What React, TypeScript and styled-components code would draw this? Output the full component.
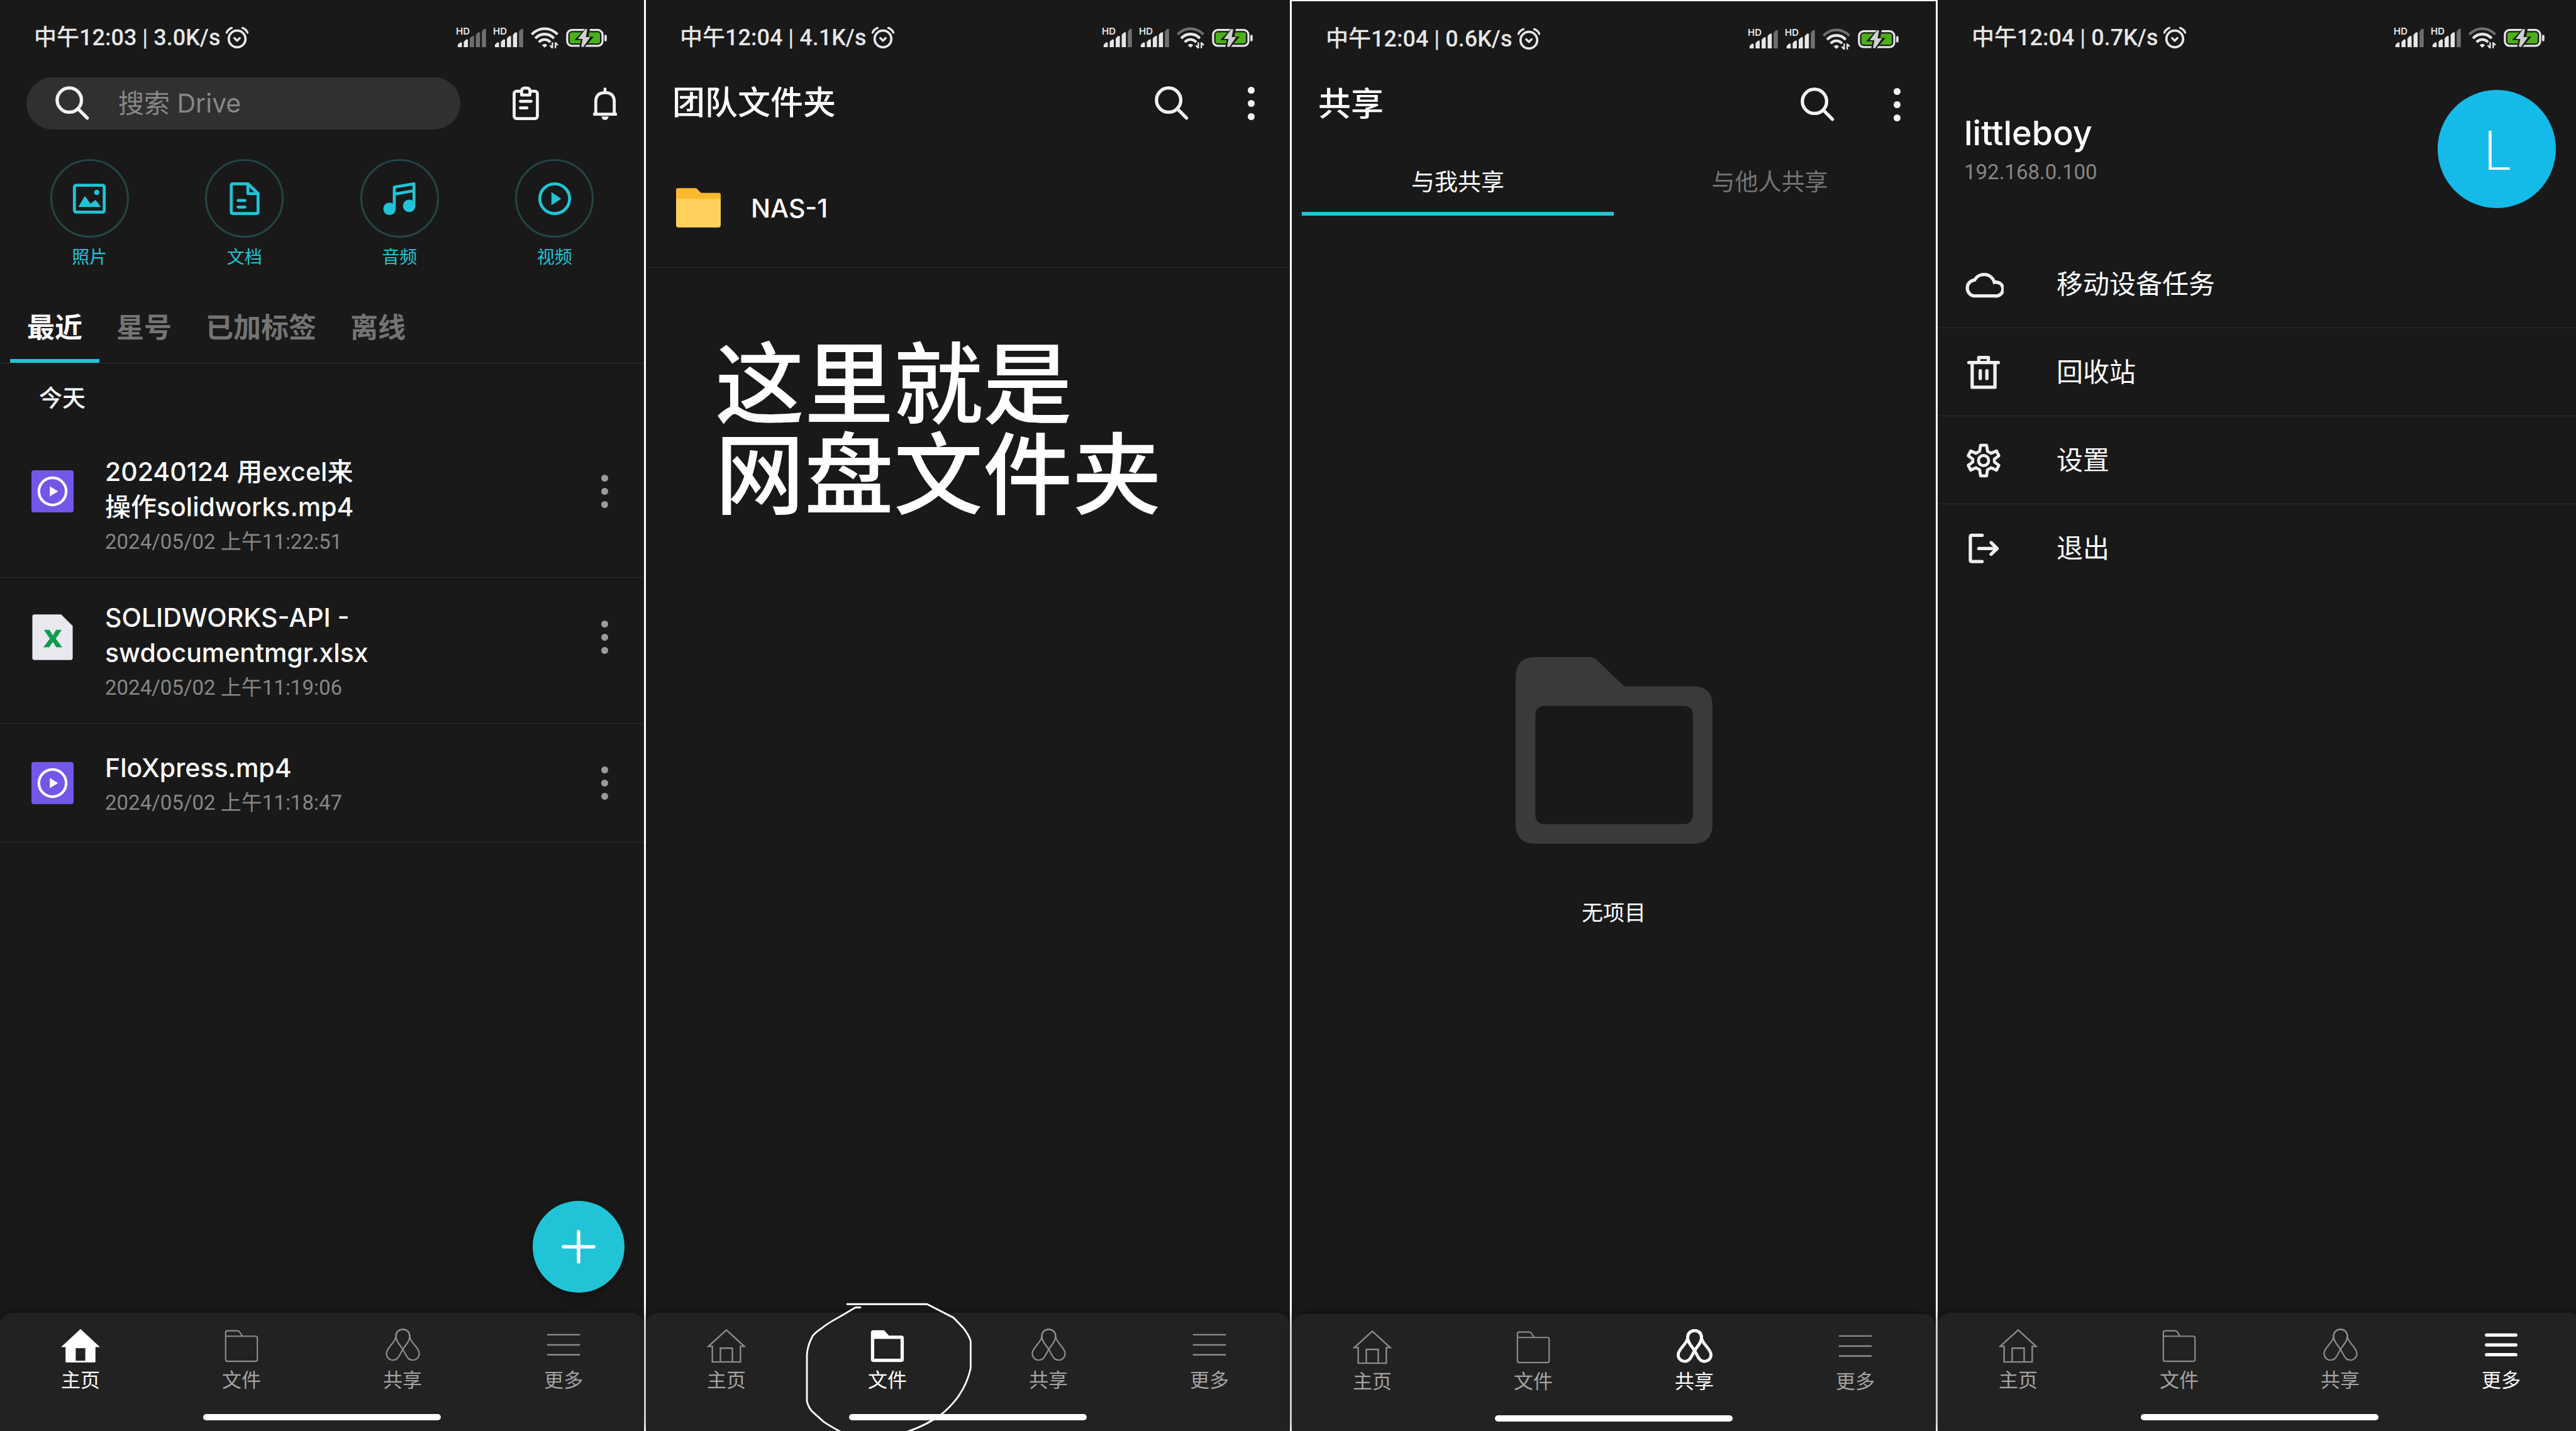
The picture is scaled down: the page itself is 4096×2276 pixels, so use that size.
import React from "react";
import styled, { createGlobalStyle } from "styled-components";

const color = {
  bg: "#191919",
  bar: "#222222",
  line: "#2f2f2f",
  text: "#ffffff",
  status: "#e6e6e6",
  muted: "#868686",
  nav: "#8c8c8c",
  navText: "#a3a3a3",
  accent: "#21c4d6",
};

const GlobalStyle = createGlobalStyle`
  *, *::before, *::after { box-sizing: border-box; }
  body {
    margin: 0;
    background: ${color.bg};
    color: ${color.text};
    font-family: Inter, "Noto Sans CJK SC", sans-serif;
  }
  button {
    padding: 0;
    border: 0;
    background: none;
    color: inherit;
    font: inherit;
    text-align: inherit;
    cursor: pointer;
  }
  h1, h2, p, ul { margin: 0; padding: 0; }
  ul { list-style: none; }
  svg { display: block; flex: none; }
`;

/* ---------- shell ---------- */

const Board = styled.main`
  display: flex;
  height: 100vh;
  overflow: hidden;
`;

const Phone = styled.section<{ $framed?: boolean }>`
  position: relative;
  box-sizing: content-box;
  flex: 0 0 25vw;
  min-width: 0;
  height: 100vh;
  display: flex;
  flex-direction: column;
  background: ${color.bg};
  border-right: 3px solid #fff;
  border-top: ${(p) => (p.$framed ? "2px solid #fff" : "0")};
`;

const Body = styled.div`
  flex: 1;
  min-height: 0;
  display: flex;
  flex-direction: column;
`;

/* ---------- status bar ---------- */

const StatusBar = styled.div`
  display: flex;
  align-items: center;
  justify-content: space-between;
  height: 120px;
  padding: 0 59px 0 54px;
  color: ${color.status};
`;

const StatusText = styled.div`
  display: flex;
  align-items: center;
  gap: 8px;
  font-family: Roboto, "Noto Sans CJK SC", sans-serif;
  font-size: 36px;
  line-height: 48px;
  font-weight: 500;
  white-space: pre;
`;

const StatusIcons = styled.div`
  display: flex;
  align-items: center;
  gap: 12px;
`;

const AlarmIcon = () => (
  <svg width="38" height="36" viewBox="0 0 40 38" fill="none" stroke="currentColor" strokeLinecap="round">
    <circle cx="20" cy="21" r="14" strokeWidth="4" />
    <path d="M15.5 19.5 L20 24 L24.500 19.500" strokeWidth="3.500" strokeLinejoin="round" />
    <path d="M2.500 10.500 Q4.500 5 11 2.500 M37.500 10.500 Q35.500 5 29 2.500" strokeWidth="3.500" />
  </svg>
);

const SignalIcon = ({ lit }: { lit: number }) => {
  const tops = [25, 20, 14, 8, 2];
  return (
    <svg width="47" height="48" viewBox="0 -8 50 50" overflow="visible">
      <text x="-1" y="12" fontSize="16" fontWeight="600" fontFamily="Inter, sans-serif" fill="currentColor">
        HD
      </text>
      {tops.map((top, i) => {
        const x = 2 + i * 10.2;
        return (
          <path
            key={top}
            d={`M${x} 33 V${top + 4} L${x + 4} ${top} H${x + 7} V33 Z`}
            fill="currentColor"
            opacity={i < lit ? 1 : 0.42}
          />
        );
      })}
    </svg>
  );
};

const WifiIcon = ({ full }: { full: boolean }) => (
  <svg width="44" height="34" viewBox="0 0 46 35" fill="none" stroke="currentColor" strokeWidth="4.500">
    <path d="M1.500 12 Q11 2.500 23 2.500 T44.500 12" opacity={full ? 1 : 0.42} />
    <path d="M7.500 18.500 Q14 11.500 23 11.500 T38.500 18.500" />
    <path d="M13.500 25 Q17.500 20.500 23 20.500 T32.500 25" />
    <path d="M18.500 30 Q23 25.500 27.500 30 L23 34 Z" fill="currentColor" stroke="none" />
    <path d="M36 25 V35 M41 25 V35 M36 35 L32 30 M41 26 L45 30" strokeWidth="2.500" />
  </svg>
);

const BatteryIcon = () => (
  <svg width="65" height="29" viewBox="0 0 69 31">
    <rect x="1.800" y="1.800" width="60" height="27" rx="8" fill="none" stroke="currentColor" strokeWidth="3.500" />
    <rect x="6" y="6" width="51.500" height="18.500" rx="3.500" fill="#4caf1b" />
    <path d="M35 -3 L14 19 H25 L22 34 H29 L47 13 H38 L41 -3 Z" fill={color.bg} />
    <path d="M33 0 L20 17 H28 L25.500 30 L29 31 L41 14 H33.500 L36 0.500 Z" fill="#cfcfcf" />
    <rect x="65" y="10" width="4" height="11" rx="2" fill="currentColor" />
  </svg>
);

const Status = ({ time, speed, lit = 4, full = false }: { time: string; speed: string; lit?: number; full?: boolean }) => (
  <StatusBar>
    <StatusText>
      中午{time} | {speed}
      <AlarmIcon />
    </StatusText>
    <StatusIcons>
      <SignalIcon lit={lit} />
      <SignalIcon lit={4} />
      <WifiIcon full={full} />
      <BatteryIcon />
    </StatusIcons>
  </StatusBar>
);

/* ---------- header ---------- */

const Header = styled.header`
  display: flex;
  align-items: center;
  height: 88px;
  padding: 0 35px 0 42px;
`;

const Title = styled.h1`
  flex: 1;
  font-size: 52px;
  line-height: 64px;
  font-weight: 500;
`;

const IconButton = styled.button`
  display: grid;
  place-items: center;
  width: 54px;
  height: 84px;
  margin-left: 72px;
  color: #f2f2f2;
`;

const SearchIcon = () => (
  <svg width="54" height="54" viewBox="0 0 56 56" fill="none" stroke="currentColor" strokeWidth="5.500" strokeLinecap="round">
    <circle cx="23" cy="23" r="20" />
    <path d="M38 38 L52.500 52.500" />
  </svg>
);

const Dots = styled.span<{ $bright?: boolean }>`
  display: flex;
  flex-direction: column;
  align-items: center;
  gap: 10px;
  &::before, &::after, i {
    content: "";
    width: 11px;
    height: 11px;
    border-radius: 50%;
    background: ${(p) => (p.$bright ? "#f2f2f2" : "#9b9b9b")};
  }
`;

const MoreDots = ({ bright }: { bright?: boolean }) => (
  <Dots $bright={bright}>
    <i />
  </Dots>
);

const TitleHeader = ({ title }: { title: string }) => (
  <Header>
    <Title>{title}</Title>
    <IconButton aria-label="搜索">
      <SearchIcon />
    </IconButton>
    <IconButton aria-label="更多选项">
      <MoreDots bright />
    </IconButton>
  </Header>
);

/* ---------- bottom navigation ---------- */

const NavBar = styled.nav`
  height: 188px;
  background: ${color.bar};
  border-radius: 20px 20px 0 0;
  box-shadow: 0 -4px 16px rgba(0, 0, 0, 0.25);
  display: flex;
  flex-direction: column;
  align-items: center;
  justify-content: space-between;
  padding-bottom: 17px;
`;

const NavItems = styled.div`
  display: flex;
  width: 100%;
`;

const NavItem = styled.button<{ $active: boolean }>`
  flex: 1;
  display: flex;
  flex-direction: column;
  align-items: center;
  padding-top: 23px;
  gap: 2px;
  font-size: 31px;
  line-height: 48px;
  color: ${(p) => (p.$active ? "#fff" : color.navText)};
  svg { color: ${(p) => (p.$active ? "#fff" : color.nav)}; }
`;

const HomeIndicator = styled.div`
  width: 378px;
  height: 10px;
  border-radius: 5px;
  background: #fff;
`;

const HomeIcon = ({ active }: { active: boolean }) => (
  <svg width="62" height="58" viewBox="0 0 65 61">
    {active ? (
      <path d="M32.500 3 L65 33 H57.500 V57 Q57.500 59 55.500 59 H9.500 Q7.500 59 7.500 57 V33 H0 Z M24.500 35 V56 H40.500 V35 Z" fill="currentColor" fillRule="evenodd" />
    ) : (
      <path d="M32.500 4.500 L62.500 32 H56 V58 H9 V32 H2.500 Z M22.500 58 V35 H42.500 V58" fill="none" stroke="currentColor" strokeWidth="2.500" />
    )}
  </svg>
);

const FolderIcon = ({ active }: { active: boolean }) => (
  <svg width="58" height="58" viewBox="0 0 61 61">
    {active ? (
      <path d="M3 9 Q3 5 7 5 H25 L33 14 H54 Q58 14 58 18 V54 Q58 58 54 58 H7 Q3 58 3 54 Z M8.500 19.500 V52.500 H52.500 V19.500 Z" fill="currentColor" fillRule="evenodd" />
    ) : (
      <path d="M4 15 V9 Q4 6 7 6 H23.500 Q26 6 27.500 8 L32 15 H54 Q57 15 57 18 V54 Q57 57 54 57 H7 Q4 57 4 54 V15 H32" fill="none" stroke="currentColor" strokeWidth="2.300" />
    )}
  </svg>
);

const ShareIcon = ({ active }: { active: boolean }) => (
  <svg width="57" height="58" viewBox="-1 -1 60 61" fill="none" stroke="currentColor" strokeWidth={active ? 5 : 2.3}>
    <path d="M29 2.500 C35.500 2.500 40.500 7 40.500 14 C40.500 23 34 28 29 36 C24 44 21.500 54 13 54 C6 54 1.500 49 1.500 43 C1.500 33 17.500 24 17.500 14 C17.500 7 22.500 2.500 29 2.500 Z" />
    <path d="M29 2.500 C22.500 2.500 17.500 7 17.500 14 C17.500 23 24 28 29 36 C34 44 36.500 54 45 54 C52 54 56.500 49 56.500 43 C56.500 33 40.500 24 40.500 14 C40.500 7 35.500 2.500 29 2.500 Z" />
  </svg>
);

const MenuIcon = ({ active }: { active: boolean }) => (
  <svg width="58" height="58" viewBox="0 0 61 61" stroke="currentColor" strokeWidth={active ? 5.5 : 2.6} strokeLinecap={active ? "round" : "butt"}>
    <path d={active ? "M6 13 H55 M6 29.500 H55 M6 46 H55" : "M3 12.500 H58 M3 29.500 H58 M3 46 H58"} />
  </svg>
);

const navEntries = [
  { label: "主页", Icon: HomeIcon },
  { label: "文件", Icon: FolderIcon },
  { label: "共享", Icon: ShareIcon },
  { label: "更多", Icon: MenuIcon },
];

const BottomNav = ({ current }: { current: string }) => (
  <NavBar>
    <NavItems>
      {navEntries.map(({ label, Icon }) => (
        <NavItem key={label} $active={label === current} aria-current={label === current ? "page" : undefined}>
          <Icon active={label === current} />
          {label}
        </NavItem>
      ))}
    </NavItems>
    <HomeIndicator />
  </NavBar>
);

/* ---------- home ---------- */

const SearchPill = styled.label`
  flex: 1;
  min-width: 0;
  display: flex;
  align-items: center;
  gap: 46px;
  height: 83px;
  margin-right: 5px;
  padding: 0 46px;
  border-radius: 42px;
  background: #303030;
  color: #f2f2f2;
`;

const SearchInput = styled.input`
  flex: 1;
  width: 100%;
  min-width: 0;
  padding: 0;
  border: 0;
  outline: 0;
  background: none;
  color: ${color.text};
  font-family: inherit;
  font-size: 41px;
  line-height: 56px;
  &::placeholder { color: #878787; opacity: 1; }
`;

const ClipboardIcon = () => (
  <svg width="44" height="54" viewBox="0 0 46 57" fill="none" stroke="currentColor" strokeWidth="5" strokeLinecap="round" strokeLinejoin="round">
    <rect x="3.500" y="8.500" width="39" height="46" rx="4" />
    <path d="M16 15 V8 Q16 3 23 3 T30 8 V15 Z" fill={color.bg} />
    <path d="M14 25.500 H32 M14 36.500 H25" />
  </svg>
);

const BellIcon = () => (
  <svg width="44" height="54" viewBox="0 0 46 57" fill="none" stroke="currentColor" strokeWidth="5">
    <path d="M3 47 H43 M7.500 46 V26 Q7.500 11 23 11 T38.500 26 V46" />
    <path d="M23 10 V5" strokeLinecap="round" />
    <path d="M17 51 H29 Q28 57 23 57 T17 51 Z" fill="currentColor" stroke="none" />
  </svg>
);

const Shortcuts = styled.div`
  display: flex;
  padding: 45px 19px 36px;
`;

const Shortcut = styled.button`
  flex: 1;
  display: flex;
  flex-direction: column;
  align-items: center;
  gap: 11px;
  color: ${color.accent};
  font-size: 28px;
  line-height: 40px;
`;

const ShortcutRing = styled.span`
  display: grid;
  place-items: center;
  width: 125px;
  height: 125px;
  border: 3px solid #244547;
  border-radius: 50%;
`;

const PhotoIcon = () => (
  <svg width="54" height="54" viewBox="0 0 57 57" fill="none" stroke="currentColor" strokeWidth="5">
    <rect x="3.500" y="6" width="50" height="45" rx="3" />
    <path d="M10 42.500 L21 24 L30.500 37 L39 30.500 L48 42.500 Z" fill="currentColor" stroke="none" />
    <circle cx="41" cy="18" r="4.500" fill="currentColor" stroke="none" />
  </svg>
);

const DocIcon = () => (
  <svg width="54" height="54" viewBox="0 0 57 57" fill="none" stroke="currentColor" strokeWidth="5" strokeLinejoin="round">
    <path d="M34 3.500 H9 Q6 3.500 6 6.500 V50.500 Q6 53.500 9 53.500 H48 Q51 53.500 51 50.500 V20 Z M34 3.500 V20 H51" />
    <path d="M17.500 31.500 H29 M17.500 42.500 H29" strokeLinecap="round" />
  </svg>
);

const MusicIcon = () => (
  <svg width="54" height="54" viewBox="0 0 57 57" fill="none" stroke="currentColor" strokeWidth="5" strokeLinejoin="round">
    <path d="M20 44 V9 L53 3.500 V38 M20 21 L53 15" />
    <circle cx="12" cy="45.500" r="10.500" fill="currentColor" stroke="none" />
    <circle cx="45" cy="40.500" r="10.500" fill="currentColor" stroke="none" />
  </svg>
);

const VideoIcon = () => (
  <svg width="54" height="54" viewBox="0 0 57 57">
    <circle cx="28.500" cy="28.500" r="25" fill="none" stroke="currentColor" strokeWidth="5" />
    <path d="M23 17.500 L39.500 28.500 L23 39.500 Z" fill="currentColor" />
  </svg>
);

const shortcuts = [
  { label: "照片", Icon: PhotoIcon },
  { label: "文档", Icon: DocIcon },
  { label: "音频", Icon: MusicIcon },
  { label: "视频", Icon: VideoIcon },
];

const Tabs = styled.div<{ $line?: boolean }>`
  display: flex;
  padding: 0 16px;
  border-bottom: ${(p) => (p.$line ? `1px solid ${color.line}` : "0")};
`;

const Tab = styled.button<{ $active?: boolean }>`
  display: flex;
  flex-direction: column;
  align-items: center;
  height: 112px;
  padding: 24px 27px 0;
  font-size: 44px;
  line-height: 64px;
  font-weight: 700;
  white-space: nowrap;
  color: ${(p) => (p.$active ? "#fff" : "#747474")};
  background: linear-gradient(${color.accent}, ${color.accent}) bottom / 100% ${(p) => (p.$active ? "6px" : "0")} no-repeat;
  border-radius: 4px 4px 0 0;
`;

const DayHeading = styled.h2`
  height: 109px;
  padding-left: 62px;
  font-size: 37px;
  line-height: 111px;
  font-weight: 500;
`;

const FileRow = styled.li`
  display: flex;
  align-items: flex-start;
  border-bottom: 1px solid ${color.line};
`;

const FileIcon = styled.span`
  display: grid;
  place-items: center;
  width: 167px;
  height: 188px;
`;

const FileText = styled.div`
  flex: 1;
  align-self: center;
  padding: 35px 0 28px;
`;

const FileName = styled.p`
  font-size: 41px;
  line-height: 56px;
  font-weight: 500;
  white-space: pre-line;
`;

const FileDate = styled.p`
  font-size: 33px;
  line-height: 56px;
  color: ${color.muted};
  font-family: Roboto, "Noto Sans CJK SC", sans-serif;
`;

const RowMore = styled.button`
  display: grid;
  place-items: center;
  width: 126px;
  height: 188px;
`;

const VideoFileIcon = () => (
  <svg width="67" height="67" viewBox="0 0 71 71">
    <rect width="71" height="71" rx="4" fill="#7257e8" />
    <circle cx="35.500" cy="35.500" r="23" fill="none" stroke="#fff" strokeWidth="4.500" />
    <path d="M31 27 L45 35.500 L31 44 Z" fill="#fff" />
  </svg>
);

const SheetFileIcon = () => (
  <svg width="67" height="73" viewBox="0 0 71 77">
    <path d="M5 0 H50 L69.500 19.500 V73 Q69.500 77 66 77 H5 Q1.500 77 1.500 73 V4 Q1.500 0 5 0 Z" fill="#e8e9ee" />
    <path d="M21 26 H30.500 L36 35.500 L41.500 26 H51 L41 41 L52 55.500 H42 L36 46.500 L30 55.500 H20 L31 41 Z" fill="#109a4e" />
  </svg>
);

const files = [
  { name: "20240124 用excel来\n操作solidworks.mp4", date: "2024/05/02 上午11:22:51", Icon: VideoFileIcon },
  { name: "SOLIDWORKS-API -\nswdocumentmgr.xlsx", date: "2024/05/02 上午11:19:06", Icon: SheetFileIcon },
  { name: "FloXpress.mp4", date: "2024/05/02 上午11:18:47", Icon: VideoFileIcon },
];

const AddButton = styled.button`
  position: absolute;
  right: 31px;
  bottom: 220px;
  display: grid;
  place-items: center;
  width: 146px;
  height: 146px;
  border-radius: 50%;
  background: ${color.accent};
  box-shadow: 0 8px 16px rgba(0, 0, 0, 0.3);
`;

const HomeScreen = () => (
  <Phone>
    <Body>
      <Status time="12:03" speed="3.0K/s" lit={2} full />
      <Header>
        <SearchPill>
          <SearchIcon />
          <SearchInput type="search" placeholder="搜索 Drive" aria-label="搜索 Drive" />
        </SearchPill>
        <IconButton aria-label="任务">
          <ClipboardIcon />
        </IconButton>
        <IconButton aria-label="通知">
          <BellIcon />
        </IconButton>
      </Header>
      <Shortcuts>
        {shortcuts.map(({ label, Icon }) => (
          <Shortcut key={label}>
            <ShortcutRing>
              <Icon />
            </ShortcutRing>
            {label}
          </Shortcut>
        ))}
      </Shortcuts>
      <Tabs $line>
        <Tab $active>最近</Tab>
        <Tab>星号</Tab>
        <Tab>已加标签</Tab>
        <Tab>离线</Tab>
      </Tabs>
      <DayHeading>今天</DayHeading>
      <ul>
        {files.map(({ name, date, Icon }) => (
          <FileRow key={name}>
            <FileIcon>
              <Icon />
            </FileIcon>
            <FileText>
              <FileName>{name}</FileName>
              <FileDate>{date}</FileDate>
            </FileText>
            <RowMore aria-label="更多操作">
              <MoreDots />
            </RowMore>
          </FileRow>
        ))}
      </ul>
    </Body>
    <AddButton aria-label="添加">
      <svg width="54" height="54" viewBox="0 0 54 54" stroke="#fff" strokeWidth="5.500" strokeLinecap="round">
        <path d="M27 3 V51 M3 27 H51" />
      </svg>
    </AddButton>
    <BottomNav current="主页" />
  </Phone>
);

/* ---------- team folders ---------- */

const FolderRow = styled.button`
  display: flex;
  align-items: center;
  height: 190px;
  margin-top: 28px;
  padding-left: 48px;
  gap: 48px;
  border-bottom: 1px solid ${color.line};
  font-size: 41px;
  line-height: 56px;
  font-weight: 500;
`;

const Note = styled.p`
  padding: 103px 0 0 110px;
  font-size: 142px;
  line-height: 144px;
  font-weight: 500;
  font-family: "AR PL UKai CN", KaiTi, "Noto Sans CJK SC", sans-serif;
`;

const Scribble = styled.svg`
  position: absolute;
  left: 248px;
  bottom: 0;
`;

const FilesScreen = () => (
  <Phone>
    <Body>
      <Status time="12:04" speed="4.1K/s" />
      <TitleHeader title="团队文件夹" />
      <FolderRow>
        <svg width="71" height="63" viewBox="0 0 75 66">
          <path d="M3 0 H34 L42 8 H72 Q75 8 75 11 V40 H0 V3 Q0 0 3 0 Z" fill="#fbb92d" />
          <path d="M3 18 H72 Q75 18 75 21 V62 Q75 66 71 66 H4 Q0 66 0 62 V21 Q0 18 3 18 Z" fill="#ffd15c" />
        </svg>
        NAS-1
      </FolderRow>
      <Note>
        这里就是
        <br />
        网盘文件夹
      </Note>
    </Body>
    <BottomNav current="文件" />
    <Scribble width="276" height="209" viewBox="1345 2180 291 220" fill="none" stroke="#fff" strokeWidth="3" strokeLinecap="round" strokeLinejoin="round">
      <path d="M1421 2187.500 H1555 L1599 2210 Q1609 2220 1617 2229 Q1626 2241 1628 2250 V2295 Q1622 2322 1606 2344 Q1594 2360 1578 2373 Q1553 2391 1520 2402 M1443 2193 H1435 L1406 2210 Q1386 2221 1378 2228 Q1365 2237 1362.500 2242 Q1354 2258 1353.500 2273 V2350 Q1356 2362 1364 2369 L1382 2385 Q1394 2393 1411 2402" />
    </Scribble>
  </Phone>
);

/* ---------- shared ---------- */

const ShareTabs = styled(Tabs)`
  margin-top: 23px;
  ${Tab} {
    flex: 1;
    height: 110px;
    padding: 29px 0 0;
    font-size: 37px;
    line-height: 56px;
    font-weight: 400;
  }
`;

const Empty = styled.div`
  display: flex;
  flex-direction: column;
  align-items: center;
  gap: 86px;
  padding-top: 702px;
  font-size: 34px;
  line-height: 48px;
`;

const SharedScreen = () => (
  <Phone $framed>
    <Body>
      <Status time="12:04" speed="0.6K/s" />
      <TitleHeader title="共享" />
      <ShareTabs>
        <Tab $active>与我共享</Tab>
        <Tab>与他人共享</Tab>
      </ShareTabs>
      <Empty>
        <svg width="313" height="297" viewBox="0 0 330 313">
          <path
            d="M33 0 H124 Q131 0 136 5 L182 49 H297 Q330 49 330 82 V280 Q330 313 297 313 H33 Q0 313 0 280 V33 Q0 0 33 0 Z M49 82 Q33 82 33 98 V264 Q33 280 49 280 H281 Q297 280 297 264 V98 Q297 82 281 82 Z"
            fill="#3a3a3a"
            fillRule="evenodd"
          />
        </svg>
        无项目
      </Empty>
    </Body>
    <BottomNav current="共享" />
  </Phone>
);

/* ---------- more ---------- */

const Profile = styled.header`
  display: flex;
  align-items: center;
  justify-content: space-between;
  padding: 23px 41px 51px 42px;
`;

const UserName = styled.h1`
  font-size: 54px;
  line-height: 64px;
  font-weight: 500;
`;

const Address = styled.p`
  margin-top: 10px;
  font-family: Roboto, sans-serif;
  font-size: 33px;
  line-height: 40px;
  color: ${color.muted};
`;

const Avatar = styled.div`
  display: grid;
  place-items: center;
  width: 188px;
  height: 188px;
  border-radius: 50%;
  background: #15bbe8;
  font-family: Lato, sans-serif;
  font-size: 86px;
  line-height: 188px;
  font-weight: 300;
`;

const MenuRow = styled.li`
  & + & { border-top: 1px solid ${color.line}; }
`;

const MenuButton = styled.button`
  display: flex;
  align-items: center;
  width: 100%;
  height: 139px;
  padding-left: 41px;
  gap: 84px;
  font-size: 42px;
  line-height: 56px;
  svg { color: #f0f0f0; }
`;

const stroke = { fill: "none", stroke: "currentColor", strokeWidth: 5.5, strokeLinecap: "round", strokeLinejoin: "round" } as const;

const CloudIcon = () => (
  <svg width="64" height="64" viewBox="0 0 67 67" {...stroke}>
    <path d="M16.500 53 A13.500 13.500 0 0 1 18.500 26.500 A18 18 0 0 1 51.500 30.500 A11.500 11.500 0 1 1 52.500 53 Z" strokeLinejoin="miter" />
  </svg>
);

const TrashIcon = () => (
  <svg width="64" height="64" viewBox="0 0 67 67" {...stroke}>
    <path d="M9 17.500 H58 M14.500 18 V58.500 H52.500 V18 M25.500 16 V9 H41.500 V16 M28 31 V44 M39 31 V44" />
  </svg>
);

const GearIcon = () => (
  <svg width="64" height="64" viewBox="0 0 67 67" {...stroke} strokeWidth="5">
    <path d="M28.500 8.500 H38.500 L40 18.500 L46 22 L55 18 L59 26 L51.500 31.500 V36.500 L59 42 L55 50 L46 46 L40 49.500 L38.500 59.500 H28.500 L27 49.500 L21 46 L12 50 L8 42 L15.500 36.500 V31.500 L8 26 L12 18 L21 22 L27 18.500 Z" />
    <circle cx="33.500" cy="34" r="8.500" />
  </svg>
);

const ExitIcon = () => (
  <svg width="64" height="64" viewBox="0 0 67 67" {...stroke}>
    <path d="M31 12 H14 Q11.500 12 11.500 14.500 V53 Q11.500 55.500 14 55.500 H31 M25.500 34 H56 M46 24 L56 34 L46 43.500" />
  </svg>
);

const menu = [
  { label: "移动设备任务", Icon: CloudIcon },
  { label: "回收站", Icon: TrashIcon },
  { label: "设置", Icon: GearIcon },
  { label: "退出", Icon: ExitIcon },
];

const MoreScreen = () => (
  <Phone>
    <Body>
      <Status time="12:04" speed="0.7K/s" />
      <Profile>
        <div>
          <UserName>littleboy</UserName>
          <Address>192.168.0.100</Address>
        </div>
        <Avatar>L</Avatar>
      </Profile>
      <ul>
        {menu.map(({ label, Icon }) => (
          <MenuRow key={label}>
            <MenuButton>
              <Icon />
              {label}
            </MenuButton>
          </MenuRow>
        ))}
      </ul>
    </Body>
    <BottomNav current="更多" />
  </Phone>
);

export default function App() {
  return (
    <>
      <GlobalStyle />
      <Board>
        <HomeScreen />
        <FilesScreen />
        <SharedScreen />
        <MoreScreen />
      </Board>
    </>
  );
}
